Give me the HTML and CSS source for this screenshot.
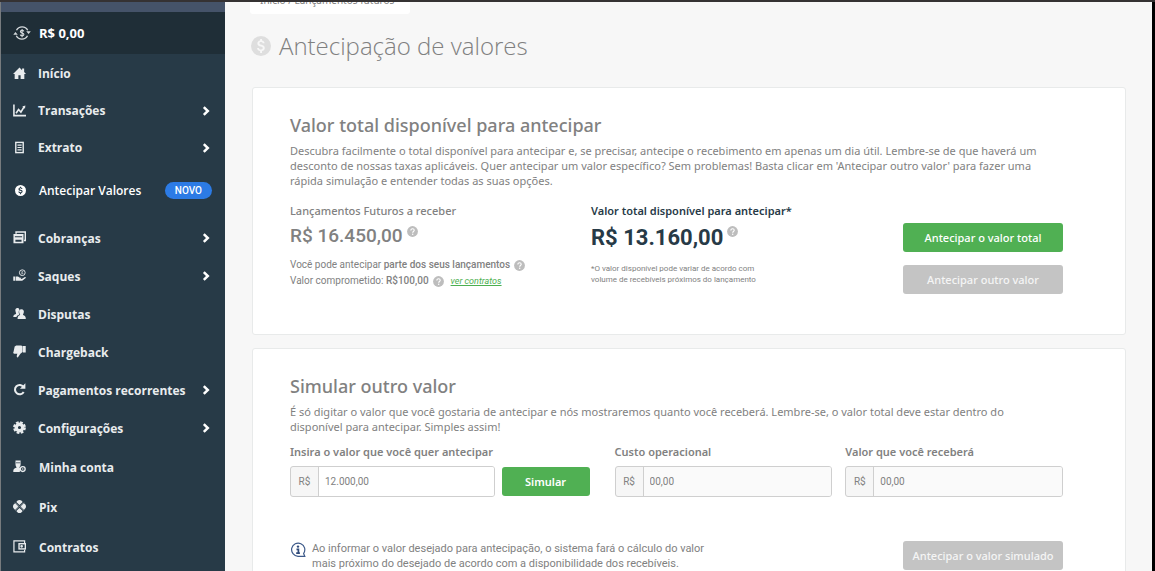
FILE: index.html
```html
<!DOCTYPE html>
<html lang="pt-BR">
<head>
<meta charset="utf-8">
<title>Antecipação de valores</title>
<link rel="stylesheet" href="styles.css">
</head>
<body>
<svg class="defs" aria-hidden="true">
  <symbol id="chevron" viewBox="0 0 8 10"><path d="M1.800 1.200 5.800 5l-4 3.800" fill="none" stroke="currentColor" stroke-width="2.500"/></symbol>
  <symbol id="help" viewBox="0 0 12 12"><circle cx="6" cy="6" r="5.900" fill="#bdbdbd"/><path d="M4.200 4.800c0-2.400 3.700-2.300 3.700-.1C7.900 6 6.200 6 6.200 7.300" fill="none" stroke="#fff" stroke-width="1.200"/><circle cx="6.200" cy="9" r=".8" fill="#fff"/></symbol>
  <symbol id="coin" viewBox="0 0 20 20"><path fill-rule="evenodd" fill="currentColor" d="M10 0a10 10 0 1 0 0 20 10 10 0 0 0 0-20zM9.100 3h1.900v1.600c1.500.3 2.400 1.200 2.600 2.600h-1.900c-.2-.8-.8-1.100-1.700-1.100-1 0-1.600.5-1.600 1.200 0 .8.7 1.100 2 1.500 2 .5 3.400 1.200 3.400 3.200 0 1.600-1.100 2.700-2.800 3V17H9.100v-2c-1.800-.3-2.900-1.400-3-3.100H8c.1 1 .8 1.500 2 1.500 1.100 0 1.800-.5 1.800-1.300 0-.9-.8-1.200-2.100-1.500-2-.5-3.300-1.200-3.300-3.100 0-1.500 1.100-2.600 2.700-2.900z"/></symbol>
</svg>
<div class="app">
  <aside class="sidebar">
    <div class="strip"></div>
    <div class="balance">
      <svg class="balance-icon" viewBox="0 0 18 16" fill="none" stroke="currentColor" stroke-width="1.300"><path d="M3.500 5.200A6.300 6.300 0 0 1 14.700 5.200M14.500 10.800A6.300 6.300 0 0 1 3.300 10.800"/><path d="M.3 9.800 2.400 7l2.400 2.800zM13.200 6.200 15.600 9l2.200-2.800z" fill="currentColor" stroke="none"/><path d="M10.800 6.400C10.300 4.900 7.400 5 7.400 6.600c0 1.800 3.500 1 3.500 2.900 0 1.700-3.200 1.800-3.700.2M9.100 4v8.200" stroke-width="1.100"/></svg>
      <span>R$ 0,00</span>
    </div>
    <nav class="menu">
      <a class="item early" href="#"><svg class="icon" viewBox="0 0 14 14" fill="currentColor"><path d="M7 .6 0 7.500h1.800V12.800h4V9h2.400v3.800h4V7.500H14L12 5.300V1.500H9.800v1.900z"/></svg><span>Início</span></a>
      <a class="item early" href="#"><svg class="icon" viewBox="0 0 14 14" fill="none" stroke="currentColor" stroke-width="1.700"><path d="M1 .5V12.500H14M3.300 10 6 6l2.500 2.700L12 3"/><path d="M10 2.800 13.300 1.500 12.900 5z" fill="currentColor" stroke="none"/></svg><span>Transações</span><svg class="chevron"><use href="#chevron"/></svg></a>
      <a class="item early" href="#"><svg class="icon" viewBox="0 0 14 14" fill="none" stroke="currentColor"><rect x="3" y="1.500" width="8" height="11" stroke-width="1.500"/><path d="M4.800 4.500h4.500M4.800 7h4.500M4.800 9.500h4.500" stroke-width="1.200"/></svg><span>Extrato</span><svg class="chevron"><use href="#chevron"/></svg></a>
      <a class="item current" href="#"><svg class="icon coin"><use href="#coin"/></svg><span>Antecipar Valores</span><span class="badge">NOVO</span></a>
      <a class="item" href="#"><svg class="icon" viewBox="0 0 14 14"><path d="M3.300 3V1h10v9.300h-1.500" fill="none" stroke="currentColor" stroke-width="1.600"/><path fill="currentColor" fill-rule="evenodd" d="M.5 3.200h10.800v10H.5zM2 5.600v1.200h7.800V5.600zM2.600 9.300v2.200h6.600V9.300z"/></svg><span>Cobranças</span><svg class="chevron"><use href="#chevron"/></svg></a>
      <a class="item" href="#"><svg class="icon" viewBox="0 0 14 14"><circle cx="10" cy="4" r="3.100" fill="none" stroke="currentColor"/><path d="M11 2.800c-1.600-.6-2.400.9-1 1.200s.6 1.700-1 1" fill="none" stroke="currentColor" stroke-width=".8"/><path fill="currentColor" d="M.3 8h2v4.700h-2zM2.900 8.200h2.500l2 1.200H9l-.4 1H6.500l2.800.3 3.500-2c1.100-.3 1.400.7.600 1.300l-3.500 2.700H2.900z"/></svg><span>Saques</span><svg class="chevron"><use href="#chevron"/></svg></a>
      <a class="item" href="#"><svg class="icon" viewBox="0 0 14 14" fill="currentColor"><path d="M4.500 1C6 1 7 1.700 6.800 3.200 5.800 4.700 6 6.500 6.800 8L4 9.800v1H.3c0-2 1-2.600 2.800-3.300C4 7 2.500 5.600 2.500 3.500 2.500 2 3.300 1 4.500 1zM9 2.500c2.400 0 3.200 1.900 2.500 4-.3 1-.8 1.300-.7 2.200 1.900.7 3 1.300 3 4.200H4.900c0-2.600.9-3.500 2.800-4.200 0-.9-.7-1.200-.9-2.200-.6-2.300.1-4 2.200-4z"/></svg><span>Disputas</span></a>
      <a class="item" href="#"><svg class="icon" viewBox="0 0 14 14" fill="currentColor"><path d="M1.800 1.500 3.500.5h5.300l1.500.8v6.200L8 9.500l-2.800 4c-1.400-.2-1.500-1.500-.5-4H1.500C.2 9.200 0 8 .6 7.200zM10.700 1h3v7h-3z"/></svg><span>Chargeback</span></a>
      <a class="item" href="#"><svg class="icon" viewBox="0 0 14 14"><path d="M11.200 4.200A5 5 0 1 0 11.500 9.600" fill="none" stroke="currentColor" stroke-width="2.200"/><path d="M13.300.3v6H7.500z" fill="currentColor"/></svg><span>Pagamentos recorrentes</span><svg class="chevron"><use href="#chevron"/></svg></a>
      <a class="item" href="#"><svg class="icon" viewBox="0 0 14 14"><circle cx="7" cy="7" r="3.500" fill="none" stroke="currentColor" stroke-width="3.600"/><circle cx="7" cy="7" r="5.800" fill="none" stroke="currentColor" stroke-width="2.200" stroke-dasharray="2.900 1.655"/></svg><span>Configurações</span><svg class="chevron"><use href="#chevron"/></svg></a>
      <a class="item late" href="#"><svg class="icon" viewBox="0 0 14 14"><path fill="currentColor" d="M2.700.5h5.500v4.200C8.200 6.500 7.300 7.500 6.800 8l1 .6-.5 4.200H.3C.2 10 1 9 4 8 3.200 7 2.700 6 2.700 4.500z"/><path d="M3.200 3h4.600" stroke="#273a47" stroke-width=".8"/><circle cx="10.500" cy="9.800" r="2.600" fill="#273a47" stroke="currentColor" stroke-width="1.400"/><circle cx="10.500" cy="9.800" r=".8" fill="currentColor"/></svg><span>Minha conta</span></a>
      <a class="item late" href="#"><svg class="icon" viewBox="0 0 14 14" fill="currentColor"><path d="M7 0c1.600 0 2.500 1 3.400 2.200L7 5.500 3.600 2.200C4.500 1 5.400 0 7 0zM7 14c1.600 0 2.500-1 3.400-2.200L7 8.500l-3.400 3.300C4.500 13 5.400 14 7 14zM0 7c0-1.600 1-2.500 2.200-3.400L5.600 7l-3.400 3.400C1 9.500 0 8.600 0 7zM14 7c0-1.600-1-2.500-2.200-3.400L8.400 7l3.400 3.400C13 9.500 14 8.600 14 7z"/><path d="M2.300 2.900 6.200 6.800M11.700 2.900 7.800 6.800M2.300 11.100 6.200 7.200M11.700 11.100 7.800 7.200" stroke="currentColor" stroke-width=".7"/></svg><span>Pix</span></a>
      <a class="item late" href="#"><svg class="icon" viewBox="0 0 14 14" fill="none" stroke="currentColor" stroke-width="1.300"><path d="M12.500 3.200V1H1v11.800h11.500v-2.300"/><rect x="6.500" y="4" width="6.800" height="5.600" stroke-width="1.500"/><circle cx="9.300" cy="6.800" r=".8"/></svg><span>Contratos</span></a>
    </nav>
  </aside>

  <main class="main">
    <div class="breadcrumb">Início / Lançamentos futuros</div>
    <h1 class="title"><svg class="title-icon"><use href="#coin"/></svg>Antecipação de valores</h1>

    <section class="card">
      <h2>Valor total disponível para antecipar</h2>
      <p class="lead">Descubra facilmente o total disponível para antecipar e, se precisar, antecipe o recebimento em apenas um dia útil. Lembre-se de que haverá um desconto de nossas taxas aplicáveis. Quer antecipar um valor específico? Sem problemas! Basta clicar em 'Antecipar outro valor' para fazer uma rápida simulação e entender todas as suas opções.</p>
      <div class="totals">
        <div>
          <h3>Lançamentos Futuros a receber</h3>
          <div class="amount">R$ 16.450,00<svg class="help"><use href="#help"/></svg></div>
          <p class="detail">Você pode antecipar <b>parte dos seus lançamentos</b><svg class="help"><use href="#help"/></svg></p>
          <p class="detail">Valor comprometido: <b>R$100,00</b><svg class="help"><use href="#help"/></svg><a href="#">ver contratos</a></p>
        </div>
        <div class="available">
          <h3>Valor total disponível para antecipar*</h3>
          <div class="amount">R$ 13.160,00<svg class="help"><use href="#help"/></svg></div>
          <p class="note">*O valor disponível pode variar de acordo com<br>volume de recebíveis próximos do lançamento</p>
        </div>
        <div class="actions">
          <button class="button">Antecipar o valor total</button>
          <button class="button muted">Antecipar outro valor</button>
        </div>
      </div>
    </section>

    <section class="card">
      <h2>Simular outro valor</h2>
      <p class="lead">É só digitar o valor que você gostaria de antecipar e nós mostraremos quanto você receberá. Lembre-se, o valor total deve estar dentro do disponível para antecipar. Simples assim!</p>
      <form class="simulate">
        <div class="entry">
          <div class="field"><label for="valor">Insira o valor que você quer antecipar</label><div class="group"><span>R$</span><input id="valor" type="text" value="12.000,00"></div></div>
          <button class="button" type="button">Simular</button>
        </div>
        <div class="field"><label for="custo">Custo operacional</label><div class="group"><span>R$</span><input id="custo" type="text" value="00,00" readonly></div></div>
        <div class="field"><label for="receber">Valor que você receberá</label><div class="group"><span>R$</span><input id="receber" type="text" value="00,00" readonly></div></div>
      </form>
      <div class="footer">
        <svg class="info" viewBox="0 0 16 16"><path d="M14.800 14.300H8A6.600 6.600 0 1 1 13.600 11.500z" fill="none" stroke="#3d5a8a" stroke-width="1.200"/><circle cx="8" cy="4.600" r="1.200" fill="#2f4a7a"/><path d="M6.500 7.300h1.900v3.800M6.200 11.200h3.700" fill="none" stroke="#2f4a7a" stroke-width="1.700"/></svg>
        <p>Ao informar o valor desejado para antecipação, o sistema fará o cálculo do valor<br>mais próximo do desejado de acordo com a disponibilidade dos recebíveis.</p>
        <button class="button muted">Antecipar o valor simulado</button>
      </div>
    </section>
  </main>
</div>
</body>
</html>
```
FILE: styles.css
```css
* { box-sizing: border-box; }
html { height: 100%; }
body {
  margin: 0;
  height: 100%;
  overflow: hidden;
  border-top: 2px solid #353233;
  background: #f7f7f7;
  color: #818181;
  font-family: "Open Sans", "Noto Sans", sans-serif;
}
h1, h2, h3, p { margin: 0; }
button, input { font: inherit; }
.defs { position: absolute; width: 0; height: 0; }

.app { display: flex; height: 100%; border-right: 3px solid #000; }

.sidebar {
  flex: 0 0 225px;
  overflow: hidden;
  border-left: 1px solid #777b7e;
  background: #273a47;
  color: #e9ecee;
}
.strip { height: 10px; background: #455369; }
.balance {
  display: flex;
  align-items: center;
  gap: 8px;
  height: 42px;
  padding-left: 12px;
  background: #1f2e37;
  color: #fff;
  font-size: 13px;
  font-weight: 700;
}
.balance-icon { width: 18px; height: 16px; color: #d5dadd; }
.menu { padding-top: 1px; }
.item {
  display: flex;
  align-items: center;
  height: 38px;
  padding: 0 15px 0 12px;
  color: inherit;
  font-size: 12px;
  font-weight: 700;
  text-decoration: none;
}
.item.early { height: 37px; }
.item.late { height: 40px; }
.item.current { height: 48px; margin-bottom: 5px; padding-right: 13px; color: #fff; font-weight: 600; }
.icon { width: 13px; height: 13px; margin: 0 12px 1px 0; }
.item.late .icon { margin: 0 13px 2px 0; }
.item.current .coin { width: 11px; height: 11px; margin: 0 13px 0 2px; }
.chevron { width: 8px; height: 10px; margin-left: auto; color: #fff; }
.badge {
  margin-left: auto;
  padding: 0 10px;
  border-radius: 9px;
  background: #2c7be5;
  font-family: Roboto, sans-serif;
  font-size: 10px;
  font-weight: 500;
  line-height: 17px;
}

.main { flex: 1; min-width: 0; overflow: hidden; padding: 0 26px 0 27px; }
.breadcrumb {
  width: max-content;
  margin: -12px 0 0 -2px;
  padding: 0 16px 3px 10px;
  border-radius: 3px;
  background: #fff;
  font-family: "Noto Sans", sans-serif;
  font-size: 10px;
  line-height: 21px;
}
.title {
  display: flex;
  align-items: center;
  gap: 8px;
  height: 73px;
  margin-left: -1px;
  padding-bottom: 10px;
  color: #808080;
  font-size: 24px;
  font-weight: 300;
}
.title-icon { width: 20px; height: 20px; color: #dedede; }

.card {
  margin-bottom: 13px;
  padding: 24px 62px 40px 37px;
  border: 1px solid #e8eaea;
  border-radius: 3px;
  background: #fff;
}
h2 { font-family: "Noto Sans", sans-serif; font-size: 18px; font-weight: 500; line-height: 26px; }
.lead {
  padding-top: 5px;
  font-family: "Noto Sans", sans-serif;
  font-size: 11px;
  line-height: 15px;
  max-width: 760px;
}
h3, label { font-family: "Noto Sans", sans-serif; font-size: 11px; font-weight: 500; line-height: 16px; }

.totals { display: grid; grid-template-columns: 301px 1fr 160px; margin-top: 15px; font-family: Roboto, sans-serif; }
.amount { display: flex; height: 34px; font-size: 19px; font-weight: 500; line-height: 34px; }
.help { width: 11px; height: 11px; }
.amount .help { margin: 7px 0 0 4px; }
.detail { display: flex; align-items: center; height: 16px; font-size: 10px; line-height: 16px; white-space: pre; }
.amount + .detail { margin-top: 4px; }
.detail b { font-weight: 500; }
.detail .help { margin: 0 7px 0 4px; }
.detail a { color: #4caf50; font-style: italic; font-size: 9px; }
.available h3 { font-weight: 600; }
.available h3, .available .amount { color: #273a47; }
.available .amount { font-size: 22px; font-weight: 700; line-height: 37px; }
.note { margin-top: 10px; font-size: 8px; line-height: 11px; }
.actions { display: grid; align-content: start; gap: 13px; padding-top: 20px; }
.button {
  height: 29px;
  padding: 0 8px;
  border: 0;
  border-radius: 3px;
  background: #50b053;
  color: #fff;
  font-family: "Noto Sans", sans-serif;
  font-size: 11px;
  font-weight: 500;
  white-space: nowrap;
}
.button.muted { background: #c4c4c4; color: #f5f5f5; }

.simulate {
  display: grid;
  grid-template-columns: 312fr 218fr 218fr;
  align-items: end;
  gap: 13px;
  margin-top: 10px;
}
.entry { display: flex; align-items: flex-end; gap: 7px; padding-right: 12px; }
.entry .field { flex: 1; }
.entry .button { width: 88px; margin-bottom: 1px; font-weight: 600; }
.field label { display: block; font-weight: 600; }
.group {
  display: flex;
  height: 31px;
  margin-top: 6px;
  overflow: hidden;
  border: 1px solid #cfcfcf;
  border-radius: 3px;
  background: #f6f6f6;
  font-family: Roboto, sans-serif;
  font-size: 10px;
}
.group span { flex: 0 0 27px; line-height: 29px; text-align: center; }
.group input {
  flex: 1;
  min-width: 0;
  padding: 0 6px;
  border: 0;
  border-left: 1px solid #cfcfcf;
  background: #fff;
  color: #818181;
}
.group input:read-only { background: #fafafa; }
.footer {
  display: flex;
  align-items: flex-start;
  gap: 6px;
  margin-top: 44px;
  font-family: Roboto, sans-serif;
  font-size: 11px;
  line-height: 15px;
}
.info { flex: none; width: 16px; height: 16px; margin-top: 1px; }
.footer .button { min-width: 160px; margin-left: auto; }
```
